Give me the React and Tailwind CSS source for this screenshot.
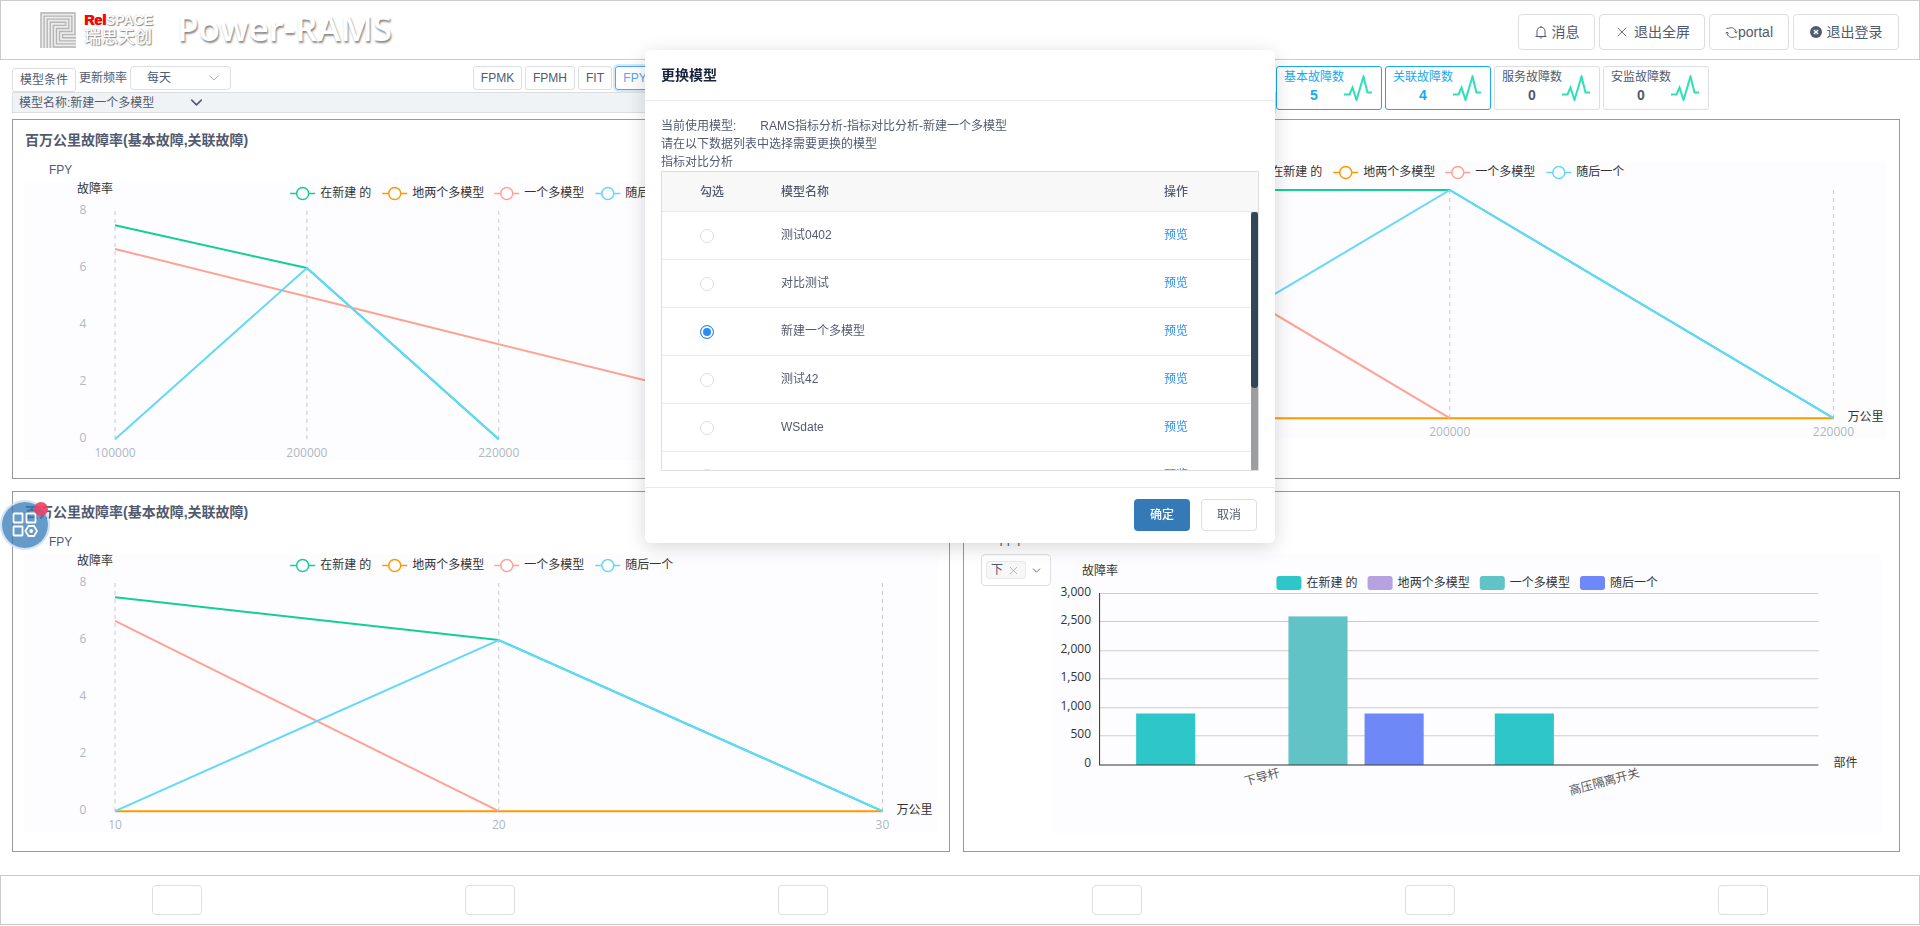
import React, { useState } from "react";
import { ChevronDown, X } from "lucide-react";

const SERIES = [
  { name: "在新建 的", color: "#13ce96", x: 266 },
  { name: "地两个多模型", color: "#ff9900", x: 358 },
  { name: "一个多模型", color: "#ffa293", x: 470 },
  { name: "随后一个", color: "#63d8fb", x: 571 },
];

const PLOT = { left: 91, right: 858, top: 29, bottom: 257 };

const CHART_A = {
  ticks: ["100000", "200000", "220000", "", ""],
  lines: [
    { color: "#13ce96", values: [7.5, 6, 0] },
    { color: "#ffa293", values: [6.67, 5, 3.33, 1.67, 0] },
    { color: "#63d8fb", values: [0, 6, 0] },
  ],
};

const CHART_B = {
  ticks: ["100000", "200000", "220000"],
  unit: "万公里",
  lines: [
    { color: "#13ce96", values: [8, 8, 0] },
    { color: "#ff9900", values: [0, 0, 0] },
    { color: "#ffa293", values: [8, 0] },
    { color: "#63d8fb", values: [0, 8, 0] },
  ],
};

const CHART_C = {
  ticks: ["10", "20", "30"],
  unit: "万公里",
  lines: [
    { color: "#13ce96", values: [7.5, 6, 0] },
    { color: "#ff9900", values: [0, 0, 0] },
    { color: "#ffa293", values: [6.67, 0] },
    { color: "#63d8fb", values: [0, 6, 0] },
  ],
};

const chartFont = "overflow-visible font-['Open_Sans','Noto_Sans_CJK_SC',sans-serif] text-[12px]";

function LineChart({ data }) {
  const step = (PLOT.right - PLOT.left) / (data.ticks.length - 1);
  const px = (i) => PLOT.left + step * i;
  const py = (v) => PLOT.bottom - ((PLOT.bottom - PLOT.top) * v) / 8;
  return (
    <svg viewBox="0 0 912 278" className={`block h-auto w-full bg-[#fdfdff] ${chartFont}`}>
      <text x="71" y="11" textAnchor="middle" fill="#333">故障率</text>
      {SERIES.map((s) => (
        <g key={s.name}>
          <path d={`M${s.x} 11.5H${s.x + 25}`} stroke={s.color} strokeWidth="1.5" />
          <circle cx={s.x + 12.5} cy="11.5" r="6" fill="#fff" stroke={s.color} strokeWidth="1.5" />
          <text x={s.x + 30} y="15" fill="#333">{s.name}</text>
        </g>
      ))}
      {[0, 2, 4, 6, 8].map((v) => (
        <text key={v} x="59" y={py(v) + 3} textAnchor="middle" fill="#adb8c0">{v}</text>
      ))}
      {data.ticks.map((t, i) => (
        <g key={i}>
          <path d={`M${px(i)} ${PLOT.top}V${PLOT.bottom}`} stroke="#c8c8cc" strokeDasharray="4 4" />
          <text x={px(i)} y="275" textAnchor="middle" fill="#adb8c0">{t}</text>
        </g>
      ))}
      {data.lines.map((l) => (
        <polyline
          key={l.color}
          points={l.values.map((v, i) => `${px(i)},${py(v)}`).join(" ")}
          fill="none"
          stroke={l.color}
          strokeWidth="2"
          strokeLinejoin="bevel"
        />
      ))}
      {data.unit && <text x="872" y="260" fill="#333">{data.unit}</text>}
    </svg>
  );
}

const BAR_LEGEND = [
  { name: "在新建 的", color: "#2ec7c9", x: 225 },
  { name: "地两个多模型", color: "#b6a2de", x: 316 },
  { name: "一个多模型", color: "#62c3c7", x: 428 },
  { name: "随后一个", color: "#6e88f7", x: 528 },
];

const BARS = [
  { x: 85, value: 900, color: "#2ec7c9" },
  { x: 237, value: 2600, color: "#62c3c7" },
  { x: 313, value: 900, color: "#6e88f7" },
  { x: 443, value: 900, color: "#2ec7c9" },
];

function BarChart() {
  const py = (v) => 211.5 - v * 0.057;
  return (
    <svg viewBox="0 1 831 278" className={`block h-auto w-full bg-[#fdfdff] ${chartFont}`}>
      <text x="31" y="22" fill="#333">故障率</text>
      {BAR_LEGEND.map((s) => (
        <g key={s.name}>
          <rect x={s.x} y="23" width="25" height="14" rx="3" fill={s.color} />
          <text x={s.x + 30} y="34" fill="#333">{s.name}</text>
        </g>
      ))}
      {[0, 500, 1000, 1500, 2000, 2500, 3000].map((v) => (
        <g key={v}>
          {v > 0 && <path d={`M49 ${Math.round(py(v)) - 0.5}H766`} stroke="#ccc" />}
          <text x="40" y={py(v) + 2} textAnchor="end" fill="#333">{v.toLocaleString("en-US")}</text>
        </g>
      ))}
      {BARS.map((b) => (
        <rect key={b.x} x={b.x} y={py(b.value)} width="59" height={b.value * 0.057} fill={b.color} />
      ))}
      <path d="M48.5 40V211.5H766" fill="none" stroke="#333" />
      <text transform="translate(229 223) rotate(-15)" textAnchor="end" fill="#555">下导杆</text>
      <text transform="translate(588 223) rotate(-15)" textAnchor="end" fill="#555">高压隔离开关</text>
      <text x="781" y="214" fill="#333">部件</text>
    </svg>
  );
}

function Panel({ title, unit, children }) {
  return (
    <section className="border border-[#999] pr-3 pb-[18px] pl-[11px]">
      <h2 className="h-[41px] pl-px text-[14px] leading-10 font-bold text-[#515a6e]">{title}</h2>
      {unit && <p className="h-[21px] pl-[25px] text-[12px] leading-[18px]">{unit}</p>}
      {children}
    </section>
  );
}

function Logo() {
  return (
    <div className="flex items-center gap-2">
      <svg viewBox="0 0 35 35" className="size-9">
        <rect width="35" height="35" fill="#ececec" />
        {[0, 1, 2, 3].map((k) => (
          <path
            key={k}
            d={`M${1 + 3 * k} 35V${1 + 3 * k}H${34 - 3 * k}V${22 - 3 * k}H${22 - 3 * k}V${25 + 3 * k}H35`}
            fill="none"
            stroke="#b4b4b4"
            strokeWidth="1.3"
          />
        ))}
      </svg>
      <div className="text-white">
        <p className="text-[14px] leading-4 font-bold [text-shadow:1px_1px_1px_#888,0_0_1px_#aaa]">
          <span className="text-[#f00] [text-shadow:1px_0_0_#f00]">Rel</span>SPACE
        </p>
        <p className="text-[17px] leading-5 font-medium [text-shadow:1px_1px_1px_#888,0_0_1px_#aaa]">瑞思天创</p>
      </div>
    </div>
  );
}

const BellIcon = () => (
  <svg viewBox="0 0 14 14" className="size-[14px]" fill="none" stroke="#515a6e" strokeWidth="1">
    <path d="M1.5 11.5H12.5M3 11.500V6.200C3 3.800 4.700 2.200 7 2.200S11 3.800 11 6.200V11.500M7 2.200V1M5.800 12.500C6 13.300 8 13.300 8.200 12.500" />
  </svg>
);

const SyncIcon = () => (
  <svg viewBox="0 0 14 14" className="size-[13px]" fill="none" stroke="#515a6e" strokeWidth="1">
    <path d="M4 2.500C7 .8 12 2.500 12 7.500L13.500 6M12 7.500L10 6M10 11.800C7 13.500 2 11.500 2 6.500L.5 8M2 6.500L4 8M4 2.500H1.500M10 11.800H12.500" />
  </svg>
);

const CloseCircleIcon = () => (
  <svg viewBox="0 0 14 14" className="size-3">
    <circle cx="7" cy="7" r="7" fill="#515a6e" />
    <path d="M4.600 4.600L9.400 9.400M9.400 4.600L4.600 9.400" stroke="#fff" strokeWidth="1.800" />
  </svg>
);

function HeaderButton({ className, children }) {
  return (
    <button className={`flex h-9 items-center justify-center rounded border border-[#dcdee2] bg-white text-[14px] ${className}`}>
      {children}
    </button>
  );
}

function StatCard({ label, value, active }) {
  return (
    <button
      className={`flex h-11 w-[106px] items-center rounded-[3px] border bg-white pl-[7px] ${
        active ? "border-[#19a9ed] text-[#19a9ed]" : "border-[#dcdee2]"
      }`}
    >
      <span className="flex w-[60px] flex-col items-center pb-1">
        <span className="text-[12px] leading-[18px]">{label}</span>
        <span className="text-[14px] leading-[18px] font-bold">{value}</span>
      </span>
      <svg viewBox="0 0 28 26" className="h-[26px] w-7" fill="none" stroke="#2edfb8" strokeWidth="2">
        <path d="M0 19.500H5.500L8.500 12.500L12.500 25L19.500 1.500L23.500 17.500H28" />
      </svg>
    </button>
  );
}

const MODELS = ["测试0402", "对比测试", "新建一个多模型", "测试42", "WSdate", ""];

function ModelDialog() {
  const [picked, setPicked] = useState(2);
  return (
    <div className="pointer-events-none fixed inset-x-0 top-[50px] z-20 flex justify-center">
      <div
        role="dialog"
        aria-labelledby="dialog-title"
        className="pointer-events-auto w-[630px] rounded-md bg-white shadow-[0_4px_20px_rgba(0,0,0,0.16)]"
      >
        <h2 id="dialog-title" className="h-[51px] border-b border-[#e8eaec] px-4 text-[14px] leading-[50px] font-bold text-[#17233d]">
          更换模型
        </h2>
        <div className="px-4 pt-4 pb-4 text-[12px] leading-[18px]">
          <p className="flex gap-6">
            <span>当前使用模型:</span>
            <span>RAMS指标分析-指标对比分析-新建一个多模型</span>
          </p>
          <p>请在以下数据列表中选择需要更换的模型</p>
          <p>指标对比分析</p>
          <div className="relative h-[300px] overflow-hidden border border-[#dcdee2]">
            <table className="w-full table-fixed border-separate border-spacing-0 text-left">
              <thead className="bg-[#f8f8f9]">
                <tr>
                  <th className="h-10 w-[119px] border-b border-[#e8eaec] pl-[38px] font-medium">勾选</th>
                  <th className="border-b border-[#e8eaec] font-medium">模型名称</th>
                  <th className="w-[94px] border-b border-[#e8eaec] font-medium">操作</th>
                </tr>
              </thead>
              <tbody>
                {MODELS.map((name, i) => (
                  <tr key={i}>
                    <td className="h-12 border-b border-[#e8eaec] pl-[38px]">
                      <input
                        type="radio"
                        name="model"
                        aria-label={name || "模型"}
                        checked={picked === i}
                        onChange={() => setPicked(i)}
                        className="block size-[14px] appearance-none rounded-full border border-[#dcdee2] bg-white checked:border-[#2d8cf0] checked:bg-[#2d8cf0] checked:shadow-[inset_0_0_0_2px_#fff]"
                      />
                    </td>
                    <td className="border-b border-[#e8eaec] pb-[2px]">{name}</td>
                    <td className="border-b border-[#e8eaec] pb-[2px]">
                      <a href="#preview" className="text-[#2d8cf0]">预览</a>
                    </td>
                  </tr>
                ))}
              </tbody>
            </table>
            <div className="absolute top-10 right-0 bottom-0 w-[7px] bg-[#9d9ea0]">
              <div className="h-[176px] rounded-full bg-[#344557]" />
            </div>
          </div>
        </div>
        <div className="flex justify-end gap-[11px] border-t border-[#e8eaec] px-[18px] pt-[11px] pb-3 text-[12px]">
          <button className="h-8 w-14 rounded bg-[#337ab7] font-medium text-white">确定</button>
          <button className="h-8 w-14 rounded border border-[#dcdee2] bg-white">取消</button>
        </div>
      </div>
    </div>
  );
}

export default function App() {
  return (
    <div className="bg-white font-['Liberation_Sans','Noto_Sans_CJK_SC',sans-serif] text-[12px] text-[#515a6e]">
      <header className="flex h-[60px] items-center justify-between border border-[#ccc] pr-5 pl-[39px]">
        <div className="flex items-center gap-6">
          <Logo />
          <h1 className="pb-1 font-['Open_Sans',sans-serif] text-[35px] leading-10 font-semibold text-white [text-shadow:1px_2px_2px_#888]">
            Power-RAMS
          </h1>
        </div>
        <nav className="flex gap-1 pt-1">
          <HeaderButton className="w-[77px] gap-1"><BellIcon />消息</HeaderButton>
          <HeaderButton className="w-[106px] gap-1"><X size={16} strokeWidth={1.3} />退出全屏</HeaderButton>
          <HeaderButton className="w-20"><SyncIcon />portal</HeaderButton>
          <HeaderButton className="w-[106px] gap-[5px]"><CloseCircleIcon />退出登录</HeaderButton>
        </nav>
      </header>

      <div className="flex px-3 pt-[6px]">
        <div className="w-2/3">
          <div className="flex h-[26px] gap-[3px]">
            <button className="mt-[2px] h-6 w-16 rounded-[3px] border border-[#dcdee2] bg-white">模型条件</button>
            <label htmlFor="freq" className="leading-6">更新频率</label>
            <div className="relative h-6 w-[101px]">
              <select id="freq" className="h-6 w-full appearance-none rounded border border-[#dcdee2] bg-white pl-4">
                <option>每天</option>
              </select>
              <ChevronDown size={16} strokeWidth={1.3} className="pointer-events-none absolute top-1 right-[9px] text-[#a0a6b2]" />
            </div>
            <div className="ml-[239px] flex gap-[3px]">
              <button className="h-6 w-[49px] rounded-[3px] border border-[#dcdee2]">FPMK</button>
              <button className="h-6 w-[50px] rounded-[3px] border border-[#dcdee2]">FPMH</button>
              <button className="h-6 w-[34px] rounded-[3px] border border-[#dcdee2]">FIT</button>
              <button className="h-6 w-10 rounded-[3px] border border-[#57a3f3] text-[#57a3f3] shadow-[0_0_0_2px_rgba(45,140,240,0.2)]">FPY</button>
            </div>
          </div>
          <button className="flex h-[21px] w-full items-center border border-[#dcdee2] bg-[#f0f3f6] pl-[6px]">
            <span className="w-[168px] text-left">模型名称:新建一个多模型</span>
            <ChevronDown size={19} strokeWidth={2} />
          </button>
        </div>
        <div className="flex gap-[3px]">
          <StatCard label="基本故障数" value="5" active />
          <StatCard label="关联故障数" value="4" active />
          <StatCard label="服务故障数" value="0" />
          <StatCard label="安监故障数" value="0" />
        </div>
      </div>

      <main className="mt-[6px] grid grid-cols-2 gap-x-[13px] gap-y-3 pr-5 pl-3">
        <Panel title="百万公里故障率(基本故障,关联故障)" unit="FPY"><LineChart data={CHART_A} /></Panel>
        <Panel><LineChart data={CHART_B} /></Panel>
        <Panel title="百万公里故障率(基本故障,关联故障)" unit="FPY"><LineChart data={CHART_C} /></Panel>
        <Panel unit="FPY">
          <div className="flex items-start pr-1 pl-[6px]">
            <button className="flex h-8 w-[70px] shrink-0 items-center gap-1 rounded border border-[#dcdee2] bg-white pl-1">
              <span className="flex h-[18px] w-10 items-center justify-center gap-1 rounded-[3px] border border-[#e8eaec] bg-[#f7f7f7]">
                下<X size={13} strokeWidth={1.3} className="text-[#999]" />
              </span>
              <ChevronDown size={13} strokeWidth={1.6} />
            </button>
            <div className="min-w-0 flex-1"><BarChart /></div>
          </div>
        </Panel>
      </main>

      <footer className="mt-[23px] grid h-[50px] grid-cols-6 items-center justify-items-center border border-[#ccc] px-[19px]">
        {[1, 2, 3, 4, 5, 6].map((n) => (
          <button key={n} aria-label={String(n)} className="h-[30px] w-[50px] rounded border border-[#dcdee2] bg-white" />
        ))}
      </footer>

      <button aria-label="应用" className="fixed top-[502px] left-[2px] z-10 flex size-[46px] items-center justify-center rounded-full bg-[#337ab7]/75 shadow-[0_0_0_2px_#cfe3f7]">
        <svg viewBox="0 0 26 26" className="size-[26px]" fill="none" stroke="#fff" strokeWidth="1.800">
          <rect x="1.500" y="1.500" width="9" height="9" rx=".5" />
          <rect x="14.500" y="1.500" width="9" height="9" rx=".5" />
          <rect x="1.500" y="14.500" width="9" height="9" rx=".5" />
          <path d="M16.500 14H22L25 19L22 24H16.500L13.500 19Z" />
          <circle cx="19.200" cy="19" r="1.200" fill="#fff" stroke="none" />
          <circle cx="19.200" cy="19" r="1" />
        </svg>
        <span className="absolute top-0 right-0 size-[14px] rounded-full bg-[#ed4064]/90" />
      </button>

      <ModelDialog />
    </div>
  );
}
